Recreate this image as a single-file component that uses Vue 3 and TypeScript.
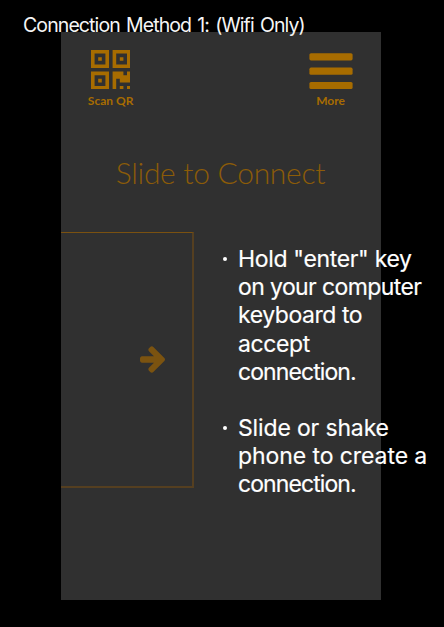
<script setup lang="ts">
interface Line {
  text: string
  spacing: number
}

const notes: Line[][] = [
  [
    { text: 'Hold "enter" key', spacing: -0.33 },
    { text: 'on your computer', spacing: -0.6 },
    { text: 'keyboard to', spacing: -0.45 },
    { text: 'accept', spacing: -0.4 },
    { text: 'connection.', spacing: -0.92 },
  ],
  [
    { text: 'Slide or shake', spacing: -0.15 },
    { text: 'phone to create a', spacing: -0.08 },
    { text: 'connection.', spacing: -0.92 },
  ],
]
</script>

<template>
  <main class="stage">
    <h1 class="caption">Connection Method 1: (Wifi Only)</h1>
    <section class="phone">
      <header class="toolbar">
        <button class="tool scan">
          <svg class="qr" viewBox="0 0 11 11" fill-rule="evenodd">
            <path d="M0 0h5v5H0zM1 1v3h3V1zM2 2h1v1H2zM6 0h5v5H6zM7 1v3h3V1zM8 2h1v1H8zM0 6h5v5H0zM1 7v3h3V7zM2 8h1v1H2zM6 6h3v1h1V6h1v3H8V8H7v3H6zM8 10h1v1H8zM10 10h1v1h-1z" />
          </svg>
          <span>Scan QR</span>
        </button>
        <button class="tool more">
          <svg class="bars" viewBox="0 0 44 37">
            <rect x="0.4" y="0.2" width="43.2" height="7.2" rx="1.6" />
            <rect x="0.4" y="14.6" width="43.2" height="7.2" rx="1.6" />
            <rect x="0.4" y="28.9" width="43.2" height="7.2" rx="1.6" />
          </svg>
          <span>More</span>
        </button>
      </header>
      <h2 class="title">Slide to Connect</h2>
      <div class="card">
        <svg class="arrow" viewBox="64 181 1472 1558">
          <path d="M1536 960q0 54-37 91l-651 651q-39 37-91 37-51 0-90-37l-75-75q-38-38-38-91t38-91l293-293h-704q-52 0-84.500-37.500t-32.500-90.500v-128q0-53 32.500-90.500t84.500-37.500h704l-293-294q-38-36-38-90t38-90l75-75q38-38 90-38 53 0 91 38l651 651q37 35 37 90z" />
        </svg>
      </div>
    </section>
    <ul class="notes">
      <li v-for="(note, i) in notes" :key="i">
        <span v-for="line in note" :key="line.text" class="line" :style="{ letterSpacing: line.spacing + 'px' }">{{ line.text }}</span>
      </li>
    </ul>
  </main>
</template>

<style>
body {
  background: #000;
}
</style>

<style scoped>
.stage {
  position: relative;
  box-sizing: border-box;
  width: 444px;
  height: 627px;
  padding: 32px 0 0 61px;
  overflow: hidden;
  background: #000;
}
.caption {
  position: absolute;
  left: 23px;
  top: 13px;
  margin: 0;
  font: 400 19.5px/24px Inter, sans-serif;
  letter-spacing: -0.9px;
  word-spacing: 1.6px;
  white-space: nowrap;
  color: #f5f5f5;
}
.phone {
  width: 320px;
  height: 568px;
  overflow: hidden;
  background: #303030;
  font-family: Lato, sans-serif;
}
.toolbar {
  display: flex;
  justify-content: space-between;
  padding: 17px 20px 0;
}
.tool {
  display: flex;
  flex-direction: column;
  align-items: center;
  width: 60px;
  padding: 0;
  border: 0;
  background: none;
  color: #a76c00;
  font: 700 12px/14px Lato, sans-serif;
}
.tool svg {
  fill: #a76c00;
}
.scan {
  margin-left: -0.4px;
}
.more {
  margin-right: 0.4px;
}
.qr {
  width: 39.6px;
  height: 39.6px;
  margin: 0.6px 0 4.8px;
}
.bars {
  width: 44px;
  height: 37px;
  margin: 4px 0;
}
.title {
  margin: 44px 1px 0 0;
  font-size: 30px;
  font-weight: 300;
  letter-spacing: -0.3px;
  line-height: 40px;
  text-align: center;
  color: #8c5c08;
}
.card {
  display: flex;
  align-items: center;
  justify-content: flex-end;
  box-sizing: border-box;
  width: 133px;
  height: 256px;
  margin-top: 40px;
  padding-right: 27px;
  border: solid #553f20;
  border-width: 1px 2px 2px 0;
  border-top-color: #7a5110;
}
.arrow {
  width: 25px;
  height: 27px;
  fill: #7b5310;
}
.notes {
  position: absolute;
  left: 238px;
  top: 245px;
  display: flex;
  flex-direction: column;
  gap: 28px;
  margin: 0;
  padding: 0;
  list-style: none;
  font: 400 23px/28.2px Inter, sans-serif;
  -webkit-text-stroke: 0.15px #fff;
  color: #fff;
}
.notes li {
  position: relative;
}
.notes li::before {
  content: '';
  position: absolute;
  left: -15px;
  top: 12px;
  width: 4px;
  height: 4px;
  border-radius: 50%;
  background: #fff;
}
.line {
  display: block;
  white-space: nowrap;
}
</style>
